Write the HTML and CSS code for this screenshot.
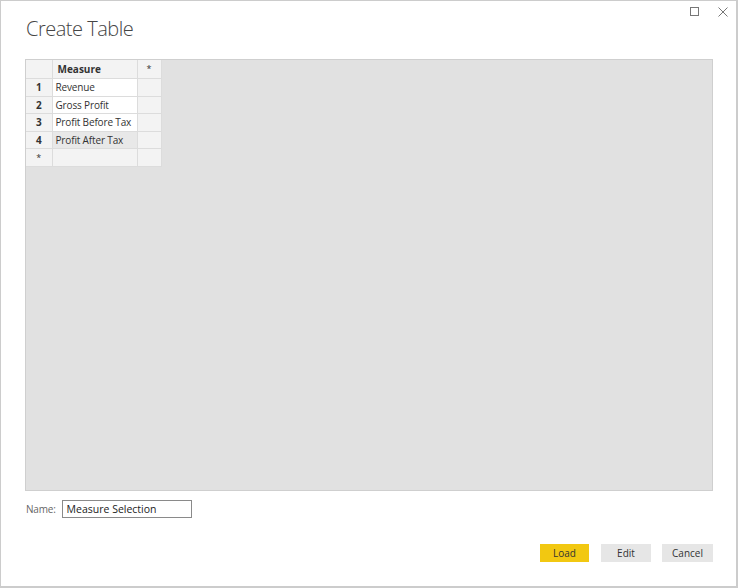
FILE: index.html
```html
<!DOCTYPE html>
<html>
<head>
<meta charset="utf-8">
<link rel="stylesheet" href="styles.css">
</head>
<body>
<div class="window">
  <div class="titlebar">
    <h1 class="title">Create Table</h1>
    <div class="controls">
      <svg class="ctl" width="10" height="10" viewBox="0 0 10 10"><rect x="0.5" y="0.5" width="8" height="8" fill="none" stroke="#777" stroke-width="1"/></svg>
      <svg class="ctl" width="10" height="10" viewBox="0 0 10 10"><path d="M0.5 0.5 L9.5 9.5 M9.5 0.5 L0.5 9.5" stroke="#777" stroke-width="1" fill="none"/></svg>
    </div>
  </div>
  <div class="grid-area">
    <table class="grid">
      <tr class="hdr"><th class="rh"></th><th class="col">Measure</th><th class="star">*</th></tr>
      <tr class="r18"><td class="rh">1</td><td class="cell">Revenue</td><td class="extra"></td></tr>
      <tr class="r17"><td class="rh">2</td><td class="cell">Gross Profit</td><td class="extra"></td></tr>
      <tr class="r18"><td class="rh">3</td><td class="cell">Profit Before Tax</td><td class="extra"></td></tr>
      <tr class="r17 sel"><td class="rh">4</td><td class="cell">Profit After Tax</td><td class="extra"></td></tr>
      <tr class="r18 new"><td class="rh">*</td><td class="cell"></td><td class="extra"></td></tr>
    </table>
  </div>
  <div class="name-row">
    <label class="name-label">Name:</label>
    <div class="name-input">Measure Selection</div>
  </div>
  <div class="buttons">
    <button class="btn primary">Load</button>
    <button class="btn">Edit</button>
    <button class="btn">Cancel</button>
  </div>
</div>
</body>
</html>
```
FILE: styles.css
```css
html, body {
  margin: 0;
  padding: 0;
  background: #ffffff;
}
body {
  width: 738px;
  height: 588px;
  font-family: "Open Sans", "Noto Sans", sans-serif;
}
.window {
  box-sizing: border-box;
  width: 738px;
  height: 588px;
  border: 1px solid #cccccc;
  border-right-width: 2px;
  border-bottom-width: 2px;
  display: flex;
  flex-direction: column;
  padding: 0 23px 0 24px;
}
.titlebar {
  display: flex;
  justify-content: space-between;
  align-items: flex-start;
  height: 58px;
}
.title {
  margin: 14px 0 0 1px;
  font-size: 20px;
  font-weight: 300;
  color: #454545;
  letter-spacing: -0.5px;
}
.controls {
  display: flex;
  gap: 18px;
  margin: 6px -15px 0 0;
}
.grid-area {
  height: 432px;
  background: #e1e1e1;
  border: 1px solid #cfcfcf;
  box-sizing: border-box;
}
.grid {
  border-collapse: collapse;
  font-size: 10px;
  color: #333333;
  table-layout: fixed;
  width: 135px;
}
.grid td, .grid th {
  border: 1px solid #dcdcdc;
  padding: 0;
  height: 17px;
  box-sizing: border-box;
  white-space: nowrap;
  overflow: hidden;
}
.grid tr:first-child th { border-top: none; }
.grid tr td:first-child, .grid tr th:first-child { border-left: none; }
.hdr th { height: 18px; background: #f3f3f3; font-weight: 700; }
.r18 td { height: 18px; }
.rh {
  width: 26px;
  background: #f3f3f3;
  text-align: center;
  font-weight: 700;
  color: #333;
}
.col { width: 85px; text-align: left; padding-left: 5px !important; }
.star { width: 24px; font-weight: 400 !important; font-size: 9px; }
.cell { background: #ffffff; padding-left: 3px !important; letter-spacing: -0.15px; }
.extra { background: #f3f3f3; }
.sel .cell { background: #e8e8e8; }
.new .rh { font-weight: 400; font-size: 9px; }
.new .cell { background: #f3f3f3; }
.name-row {
  display: flex;
  align-items: center;
  margin-top: 9px;
  height: 18px;
}
.name-label {
  font-size: 10px;
  color: #666666;
  margin: 0 6px 0 1px;
  letter-spacing: -0.2px;
}
.name-input {
  box-sizing: border-box;
  width: 130px;
  height: 18px;
  border: 1px solid #8a8a8a;
  font-size: 10.5px;
  color: #222;
  padding-left: 4px;
  line-height: 17px;
}
.buttons {
  display: flex;
  justify-content: flex-end;
  gap: 11px;
  margin-top: 26px;
}
.btn {
  width: 50px;
  height: 18px;
  border: none;
  background: #e6e6e6;
  font-family: "Open Sans", "Noto Sans", sans-serif;
  font-size: 10px;
  color: #333333;
  padding: 0;
}
.btn.primary { background: #f2c811; width: 49px; margin-right: 1px; }
.btn:last-child { width: 51px; }
```
